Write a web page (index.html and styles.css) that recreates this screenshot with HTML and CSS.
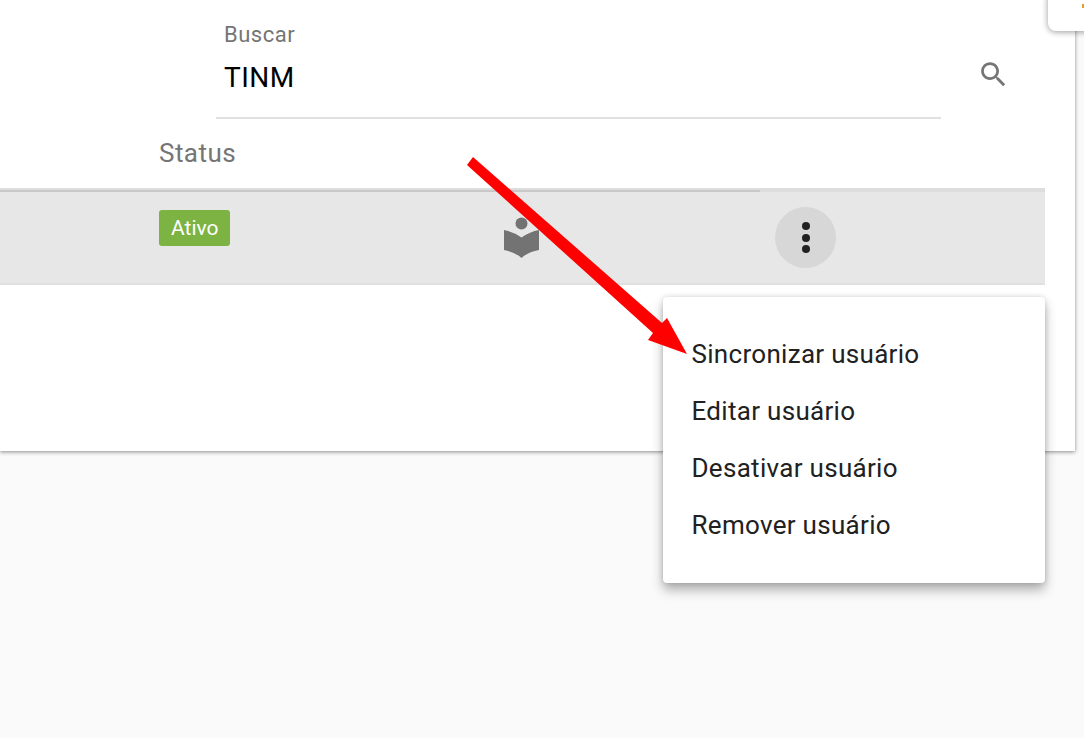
FILE: index.html
```html
<!DOCTYPE html>
<html lang="pt-BR">
<head>
    <meta charset="UTF-8">
    <meta name="viewport" content="width=device-width, initial-scale=1.0">
    <title>Usuários</title>
    <link rel="stylesheet" href="styles.css">
</head>
<body>
    <div class="card">
        <div class="search">
            <div class="search-field">
                <label class="search-label" for="busca">Buscar</label>
                <input class="search-input" id="busca" type="text" value="TINM">
            </div>
            <svg class="search-icon" viewBox="0 0 24 24" aria-hidden="true">
                <path d="M15.5 14h-.79l-.28-.27C15.41 12.59 16 11.11 16 9.5 16 5.91 13.09 3 9.5 3S3 5.91 3 9.5 5.91 16 9.5 16c1.61 0 3.09-.59 4.23-1.57l.27.28v.79l5 4.99L20.49 19l-4.99-5zm-6 0C7.01 14 5 11.99 5 9.5S7.01 5 9.5 5 14 7.01 14 9.5 11.99 14 9.5 14z"/>
            </svg>
        </div>
        <div class="table">
            <div class="table-head">Status</div>
            <div class="table-rule"><div class="table-rule-ink"></div></div>
            <div class="table-row">
                <div class="cell-status"><span class="badge">Ativo</span></div>
                <div class="cell-icon">
                    <svg class="reader-icon" viewBox="0 0 36 42" aria-hidden="true">
                        <circle cx="17.5" cy="6.5" r="6"/>
                        <path d="M0 13Q9 14.5 17.5 20.5Q26 14.5 35 13V33Q24 35 17.5 41Q11 35 0 33Z"/>
                    </svg>
                </div>
                <div class="cell-actions">
                    <button class="more-btn" type="button" aria-label="Mais opções">
                        <span class="dot"></span>
                        <span class="dot"></span>
                        <span class="dot"></span>
                    </button>
                </div>
            </div>
        </div>
    </div>

    <div class="corner-card"><span class="corner-tick"></span></div>

    <ul class="menu">
        <li>Sincronizar usuário</li>
        <li>Editar usuário</li>
        <li>Desativar usuário</li>
        <li>Remover usuário</li>
    </ul>

    <!-- seta vermelha da anotacao -->
    <svg class="arrow" viewBox="0 0 1084 738" aria-hidden="true">
        <polygon points="467,165 473,157 662,323 667,318 687,354 648,340 653,333"/>
    </svg>
</body>
</html>
```

FILE: styles.css
```css
body {
    font-family: Roboto, Arial, sans-serif;
    background-color: #fafafa;
    margin: 0;
    height: 738px;
    overflow: hidden;
}
.card {
    background-color: #fff;
    width: 1075px;
    height: 451px;
    padding-right: 30px;
    box-sizing: border-box;
    box-shadow: 0 1px 4px rgba(0, 0, 0, 0.45);
}
.search {
    display: flex;
    height: 119px;
    padding-left: 216px;
}
.search-field {
    width: 725px;
    height: 119px;
    padding: 21px 8px 0;
    box-sizing: border-box;
    border-bottom: 2px solid #e0e0e0;
}
.search-label {
    display: block;
    color: #757575;
    font-size: 22px;
    line-height: 27px;
    letter-spacing: 0.5px;
}
.search-input {
    display: block;
    width: 100%;
    margin-top: 2px;
    padding: 0;
    border: none;
    outline: none;
    background: none;
    font-family: inherit;
    font-size: 28px;
    letter-spacing: 0.5px;
    line-height: 55px;
    height: 55px;
    color: #000;
}
.search-icon {
    width: 33px;
    height: 33px;
    margin: 58px 0 0 36px;
    fill: #757575;
}
.table-head {
    height: 69px;
    padding-left: 159px;
    box-sizing: border-box;
    color: #757575;
    font-size: 26px;
    letter-spacing: 0.45px;
    line-height: 68px;
}
.table-rule {
    height: 4px;
    background-color: #ddd;
}
.table-rule-ink {
    width: 760px;
    height: 2px;
    position: relative;
    top: 2px;
    background-color: #c8c8c8;
}
.table-row {
    display: flex;
    height: 93px;
    box-sizing: border-box;
    background-color: #e7e7e7;
    border-bottom: 2px solid #e0e0e0;
}
.cell-status {
    width: 504px;
    padding: 18px 0 0 159px;
    box-sizing: border-box;
}
.badge {
    display: inline-block;
    background-color: #7cb342;
    color: #fff;
    font-size: 21px;
    line-height: 36px;
    height: 36px;
    padding: 0 11.5px 0 12px;
    border-radius: 3px;
}
.cell-icon {
    width: 271px;
    padding-top: 25px;
    box-sizing: border-box;
}
.reader-icon {
    display: block;
    width: 36px;
    height: 42px;
    fill: #737373;
}
.more-btn {
    display: flex;
    flex-direction: column;
    align-items: center;
    justify-content: center;
    gap: 3.5px;
    width: 61px;
    height: 61px;
    margin-top: 15px;
    padding: 0 0 0 1px;
    border: none;
    border-radius: 50%;
    background-color: #d7d7d7;
}
.dot {
    width: 8px;
    height: 8px;
    border-radius: 50%;
    background-color: #212121;
}
.corner-card {
    position: absolute;
    top: -10px;
    left: 1048px;
    width: 60px;
    height: 41px;
    background-color: #fff;
    border-radius: 8px;
    box-shadow: 0 1px 6px rgba(0, 0, 0, 0.4);
}
.corner-tick {
    position: absolute;
    top: 14px;
    left: 34px;
    width: 2px;
    height: 4px;
    background-color: #e0a030;
}
.menu {
    position: absolute;
    top: 297px;
    left: 663px;
    width: 382px;
    height: 286px;
    margin: 0;
    padding: 29px 0;
    box-sizing: border-box;
    list-style: none;
    background-color: #fff;
    border-radius: 4px;
    box-shadow: 0 7px 12px rgba(0, 0, 0, 0.3), 0 0 5px rgba(0, 0, 0, 0.15);
}
.menu li {
    height: 57px;
    padding-left: 28.5px;
    color: #212121;
    font-size: 26px;
    letter-spacing: 0.3px;
    line-height: 57px;
}
.arrow {
    position: absolute;
    top: 0;
    left: 0;
    width: 1084px;
    height: 738px;
    fill: #ff0000;
    pointer-events: none;
}
```
